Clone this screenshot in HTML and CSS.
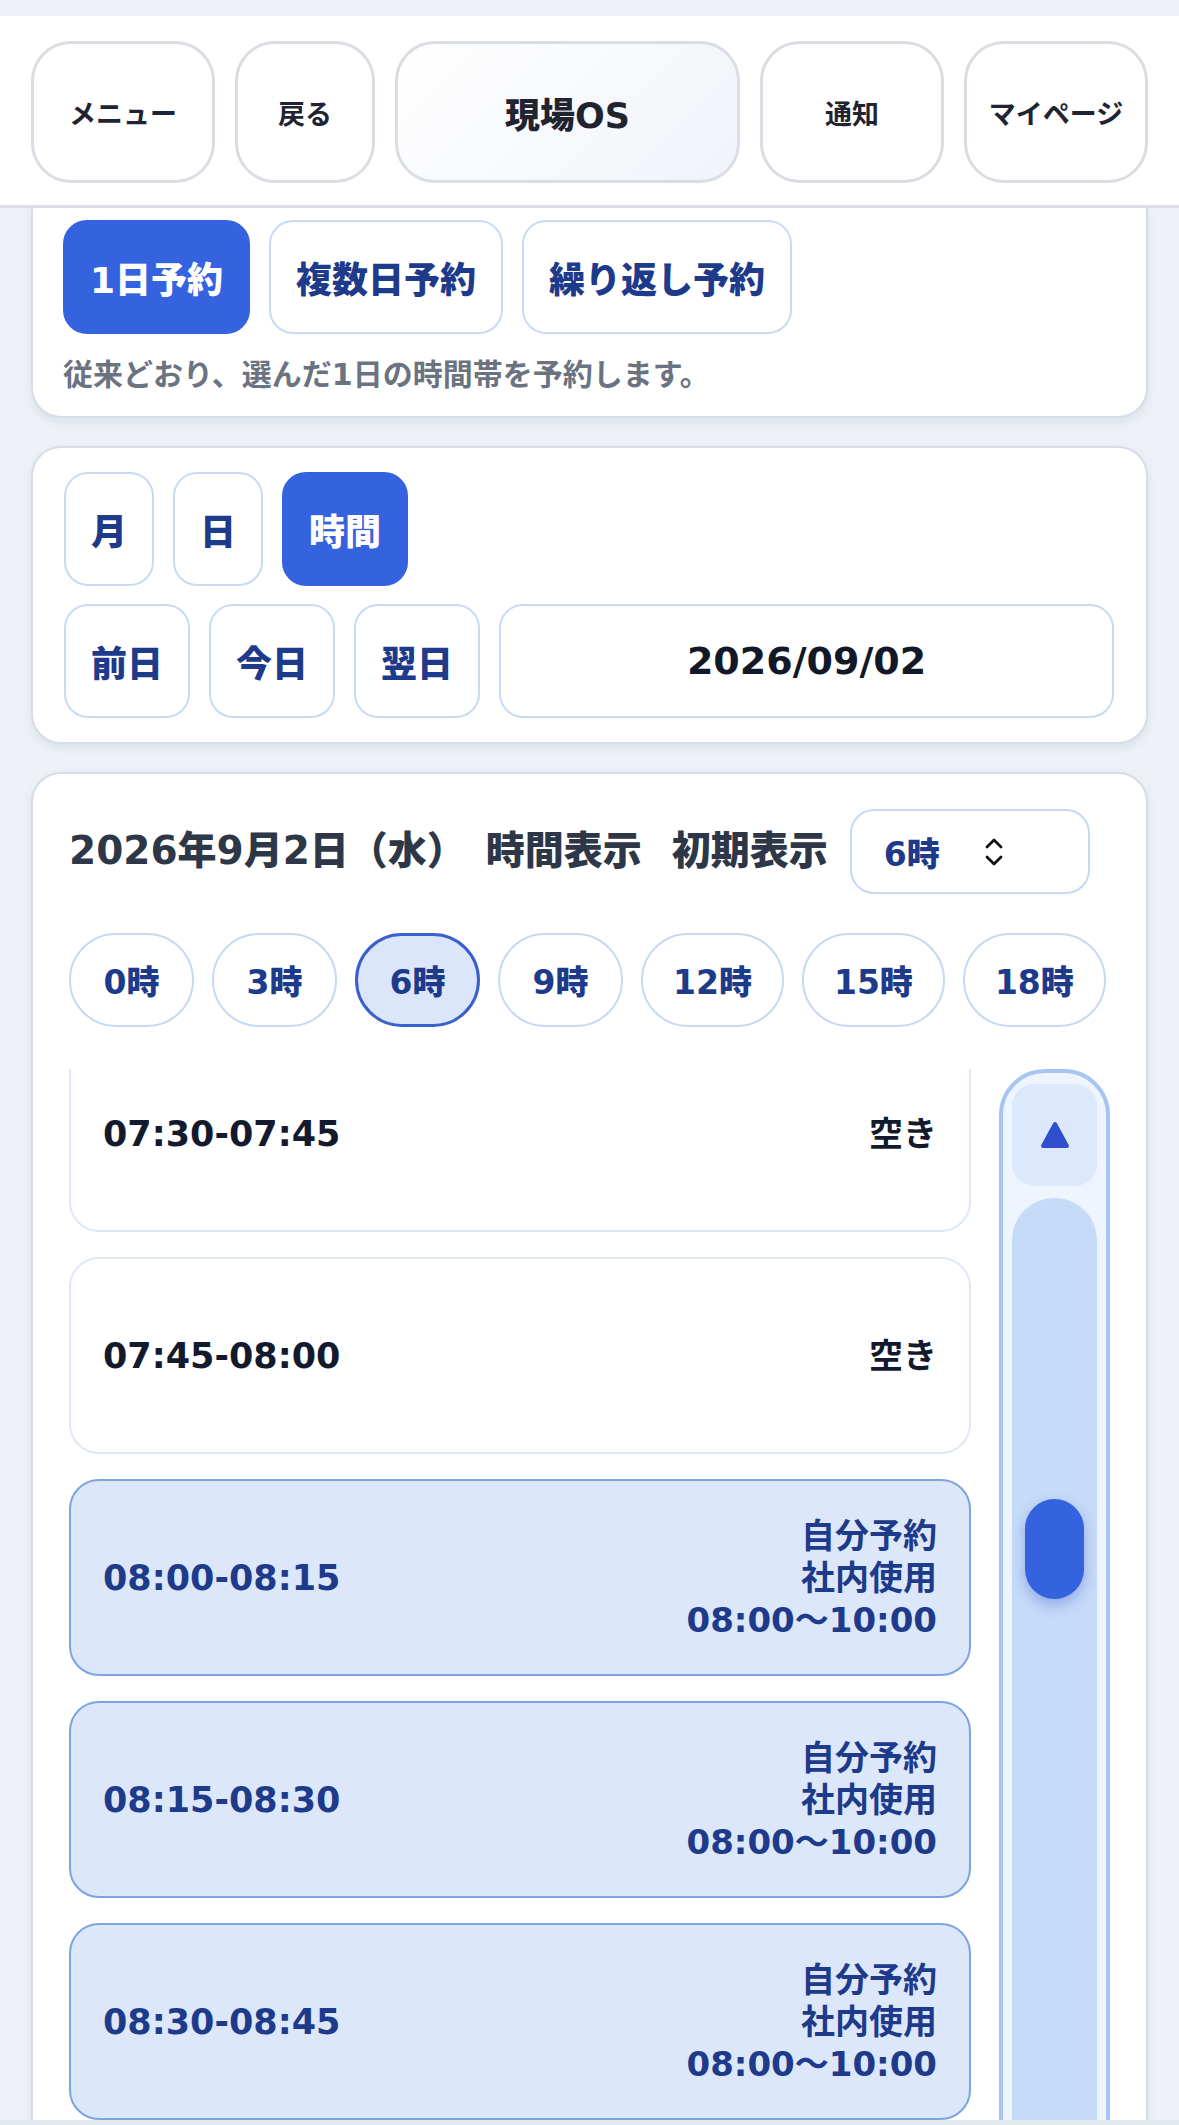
FILE: index.html
```html
<!DOCTYPE html>
<html lang="ja">
<head>
  <meta charset="UTF-8">
  <meta name="viewport" content="width=device-width, initial-scale=1.0">
  <title>現場OS 予約</title>
  <link rel="stylesheet" href="styles.css">
</head>
<body>
  <header class="topbar">
    <button class="nav-btn">メニュー</button>
    <button class="nav-btn">戻る</button>
    <button class="nav-btn nav-title">現場OS</button>
    <button class="nav-btn">通知</button>
    <button class="nav-btn">マイページ</button>
  </header>

  <main class="page">
    <section class="card card-mode">
      <div class="btn-row">
        <button class="seg active">1日予約</button>
        <button class="seg">複数日予約</button>
        <button class="seg">繰り返し予約</button>
      </div>
      <p class="hint">従来どおり、選んだ1日の時間帯を予約します。</p>
    </section>

    <section class="card card-view">
      <div class="btn-row">
        <button class="seg">月</button>
        <button class="seg">日</button>
        <button class="seg active">時間</button>
      </div>
      <div class="btn-row">
        <button class="seg">前日</button>
        <button class="seg">今日</button>
        <button class="seg">翌日</button>
        <div class="date-field">2026/09/02</div>
      </div>
    </section>

    <section class="card card-day">
      <div class="day-head">
        <h2 class="day-title">2026年9月2日（水）<span class="sub">時間表示</span></h2>
        <span class="day-label">初期表示</span>
        <div class="select">
          <span>6時</span>
          <svg class="chevrons" width="20" height="34" viewBox="0 0 20 34">
            <path d="M3 12 L10 5 L17 12 M3 22 L10 29 L17 22" fill="none" stroke="#111" stroke-width="2.8" stroke-linecap="round" stroke-linejoin="round"/>
          </svg>
        </div>
      </div>

      <div class="hour-chips">
        <button class="chip">0時</button>
        <button class="chip">3時</button>
        <button class="chip active">6時</button>
        <button class="chip">9時</button>
        <button class="chip">12時</button>
        <button class="chip">15時</button>
        <button class="chip">18時</button>
      </div>

      <div class="slot-area">
        <div class="slot-list">
          <div class="slot">
            <span class="slot-time">07:30-07:45</span>
            <span class="slot-info">空き</span>
          </div>
          <div class="slot">
            <span class="slot-time">07:45-08:00</span>
            <span class="slot-info">空き</span>
          </div>
          <div class="slot mine">
            <span class="slot-time">08:00-08:15</span>
            <span class="slot-info">自分予約<br>社内使用<br>08:00〜10:00</span>
          </div>
          <div class="slot mine">
            <span class="slot-time">08:15-08:30</span>
            <span class="slot-info">自分予約<br>社内使用<br>08:00〜10:00</span>
          </div>
          <div class="slot mine">
            <span class="slot-time">08:30-08:45</span>
            <span class="slot-info">自分予約<br>社内使用<br>08:00〜10:00</span>
          </div>
        </div>

        <div class="scroller">
          <button class="scroll-up">
            <svg width="32" height="30" viewBox="0 0 32 30">
              <path d="M16 4 L28 26 L4 26 Z" fill="#2f4fcf" stroke="#2f4fcf" stroke-width="4" stroke-linejoin="round"/>
            </svg>
          </button>
          <div class="scroll-track">
            <div class="scroll-thumb"></div>
          </div>
        </div>
      </div>
    </section>
  </main>

  <div class="bottom-edge"></div>
</body>
</html>
```

FILE: styles.css
```css
* {
  box-sizing: border-box;
}

body {
  margin: 0;
  padding-top: 16px;
  background: #edf1f7;
  font-family: "DejaVu Sans", "Noto Sans CJK JP", sans-serif;
  color: #1f2430;
}

button {
  font-family: inherit;
  cursor: pointer;
}

/* top navigation */
.topbar {
  display: grid;
  grid-template-columns: 184px 140px 1fr 184px 184px;
  gap: 20px;
  padding: 25px 31px 22px;
  background: #fff;
  border-bottom: 3px solid #dcdfe5;
}

.nav-btn {
  height: 142px;
  padding: 0;
  border: 3px solid #dadde3;
  border-radius: 40px;
  background: #fff;
  color: #1f2430;
  font-size: 27px;
  font-weight: 700;
}

.nav-title {
  font-size: 35px;
  font-weight: 800;
  background: linear-gradient(135deg, #ffffff 0%, #f0f3f9 100%);
}

/* page */
.page {
  display: flex;
  flex-direction: column;
  gap: 28px;
  padding: 0 31px 40px;
}

.card {
  background: #fff;
  border: 2px solid #d7dde7;
  border-radius: 30px;
  box-shadow: 0 4px 10px rgba(30, 50, 90, 0.08);
}

.card-mode {
  border-top: none;
  border-radius: 0 0 30px 30px;
  padding: 12px 31px 20px 30px;
}

.card-view {
  display: flex;
  flex-direction: column;
  gap: 18px;
  padding: 24px 32px 24px 31px;
}

.btn-row {
  display: flex;
  gap: 19px;
}

.seg {
  height: 114px;
  padding: 0 25px;
  border: 2px solid #c9daf4;
  border-radius: 24px;
  background: #fff;
  color: #1e3a8a;
  font-size: 36px;
  font-weight: 800;
}

.seg.active {
  background: #3563e0;
  border-color: #3563e0;
  color: #fff;
}

.hint {
  margin: 20px 0 0;
  font-size: 30px;
  line-height: 42px;
  font-weight: 700;
  color: #6b7280;
}

.date-field {
  flex: 1;
  display: flex;
  align-items: center;
  justify-content: center;
  height: 114px;
  border: 2px solid #c9daf4;
  border-radius: 24px;
  color: #111827;
  font-size: 38px;
  font-weight: 700;
}

/* day view */
.card-day {
  padding: 35px 36px 0;
}

.day-head {
  display: flex;
  align-items: center;
  white-space: nowrap;
}

.day-title,
.day-label {
  margin: 0;
  font-size: 39px;
  line-height: 1.2;
  font-weight: 800;
  color: #2d3748;
}

.day-title .sub {
  margin-left: 20px;
}

.day-label {
  margin-left: 30px;
}

.select {
  display: flex;
  align-items: center;
  gap: 44px;
  width: 240px;
  height: 85px;
  margin-left: 22px;
  padding: 0 32px;
  border: 2px solid #c6d8f3;
  border-radius: 24px;
  color: #1e3a8a;
  font-size: 33px;
  font-weight: 800;
}

.hour-chips {
  display: flex;
  gap: 18px;
  margin-top: 39px;
}

.chip {
  flex: none;
  min-width: 125px;
  height: 94px;
  padding: 0 30px;
  border: 2px solid #c6d8f4;
  border-radius: 47px;
  background: #fff;
  color: #1e3a8a;
  font-size: 33px;
  font-weight: 800;
}

.chip.active {
  padding: 0 29px;
  border: 3px solid #3a5fcf;
  background: #dbe6fb;
}

/* slots */
.slot-area {
  display: grid;
  grid-template-columns: 1fr 111px;
  gap: 28px;
  height: 1150px;
  margin-top: 42px;
}

.slot-list {
  display: flex;
  flex-direction: column;
  gap: 25px;
  overflow: hidden;
}

.slot {
  flex: none;
  display: flex;
  align-items: center;
  justify-content: space-between;
  height: 197px;
  padding: 0 32px;
  border: 2px solid #dfe8f6;
  border-radius: 30px;
  background: #fff;
  color: #141a2e;
  font-weight: 700;
}

.slot:first-child {
  margin-top: -34px;
}

.slot.mine {
  background: #dce7fa;
  border-color: #7ca3e2;
  color: #1e3a8a;
}

.slot-time {
  font-size: 35px;
}

.slot-info {
  text-align: right;
  font-size: 34px;
  line-height: 42px;
}

/* scroll buttons */
.scroller {
  display: flex;
  flex-direction: column;
  gap: 12px;
  padding: 11px 9px 0;
  border: 4px solid #a6c5f2;
  border-radius: 46px;
  background: #eef5ff;
}

.scroll-up {
  flex: none;
  display: flex;
  align-items: center;
  justify-content: center;
  height: 102px;
  padding: 0;
  border: none;
  border-radius: 22px;
  background: #dce8fb;
}

.scroll-track {
  flex: 1;
  padding: 301px 13px 0;
  border-radius: 42px 42px 0 0;
  background: #c6dbf8;
}

.scroll-thumb {
  height: 100px;
  border-radius: 30px;
  background: #3563e0;
  box-shadow: 0 6px 14px rgba(40, 80, 200, 0.35);
}

.bottom-edge {
  position: fixed;
  left: 0;
  right: 0;
  bottom: 0;
  height: 5px;
  background: #e3e7ee;
}
```
